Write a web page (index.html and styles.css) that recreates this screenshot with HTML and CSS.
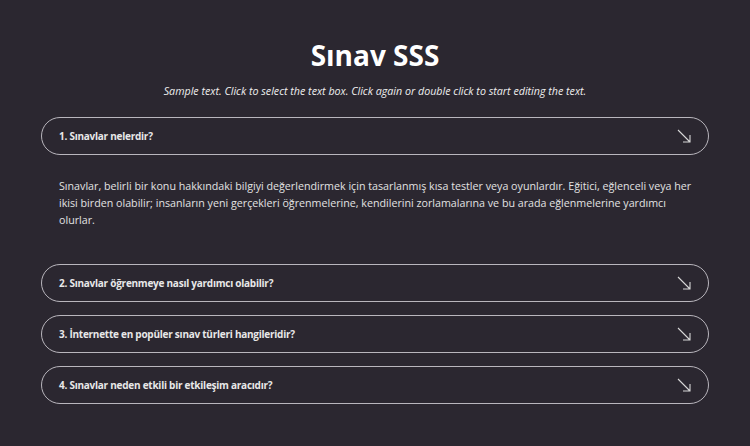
FILE: index.html
```html
<!DOCTYPE html>
<html lang="tr">
<head>
  <meta charset="UTF-8">
  <meta name="viewport" content="width=device-width, initial-scale=1.0">
  <title>Sınav SSS</title>
  <link rel="stylesheet" href="styles.css">
</head>
<body>
  <section class="faq">
    <h1>Sınav SSS</h1>
    <p class="lead">Sample text. Click to select the text box. Click again or double click to start editing the text.</p>

    <div class="accordion">
      <div class="item open">
        <div class="question">
          <span>1. Sınavlar nelerdir?</span>
          <svg class="arrow" width="14" height="14" viewBox="0 0 14 14"><path d="M1 1 L13 13 M6 13 H13 V6" fill="none" stroke="#d8d8d8" stroke-width="1.1"/></svg>
        </div>
        <div class="answer">
          Sınavlar, belirli bir konu hakkındaki bilgiyi değerlendirmek için tasarlanmış kısa testler veya oyunlardır. Eğitici, eğlenceli veya her ikisi birden olabilir; insanların yeni gerçekleri öğrenmelerine, kendilerini zorlamalarına ve bu arada eğlenmelerine yardımcı olurlar.
        </div>
      </div>
      <div class="item">
        <div class="question">
          <span>2. Sınavlar öğrenmeye nasıl yardımcı olabilir?</span>
          <svg class="arrow" width="14" height="14" viewBox="0 0 14 14"><path d="M1 1 L13 13 M6 13 H13 V6" fill="none" stroke="#d8d8d8" stroke-width="1.1"/></svg>
        </div>
      </div>
      <div class="item">
        <div class="question">
          <span>3. İnternette en popüler sınav türleri hangileridir?</span>
          <svg class="arrow" width="14" height="14" viewBox="0 0 14 14"><path d="M1 1 L13 13 M6 13 H13 V6" fill="none" stroke="#d8d8d8" stroke-width="1.1"/></svg>
        </div>
      </div>
      <div class="item">
        <div class="question">
          <span>4. Sınavlar neden etkili bir etkileşim aracıdır?</span>
          <svg class="arrow" width="14" height="14" viewBox="0 0 14 14"><path d="M1 1 L13 13 M6 13 H13 V6" fill="none" stroke="#d8d8d8" stroke-width="1.1"/></svg>
        </div>
      </div>
    </div>
  </section>
</body>
</html>
```

FILE: styles.css
```css
body {
  margin: 0;
  background-color: #2b2730;
  color: #e6e6e6;
  font-family: 'Open Sans', 'Noto Sans', sans-serif;
}
.faq {
  padding: 36px 41px 20px;
}
h1 {
  margin: 0;
  text-align: center;
  color: #fff;
  font-size: 28px;
  font-weight: 700;
  line-height: 38px;
}
.lead {
  margin: 9px 0 18px;
  text-align: center;
  font-size: 10.7px;
  font-style: italic;
  line-height: 16px;
  color: #eee;
}
.accordion {
  display: flex;
  flex-direction: column;
  gap: 13px;
}
.question {
  display: flex;
  justify-content: space-between;
  align-items: center;
  height: 36px;
  padding: 0 17px;
  border: 1px solid #b9b6bd;
  border-radius: 20px;
  font-size: 10px;
  font-weight: 700;
  letter-spacing: -0.25px;
  color: #e8e8e8;
}
.answer {
  padding: 23px 6px 22px 18px;
  font-size: 10.7px;
  line-height: 17px;
  color: #e2e2e2;
}
```
